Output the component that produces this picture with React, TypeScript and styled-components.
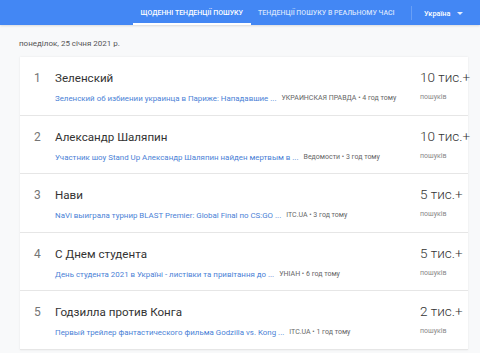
import React from "react";
import styled, { createGlobalStyle } from "styled-components";

const Global = createGlobalStyle`
  html, body { margin: 0; padding: 0; background: #f8f9fa; }
  body { font-family: Roboto, "Noto Sans", Arial, sans-serif; overflow: hidden; }
`;

const Page = styled.div`
  width: 480px;
  height: 353px;
  background: #f8f9fa;
  display: flex;
  flex-direction: column;
`;

const Header = styled.header`
  height: 25px;
  background: #4387f4;
  display: flex;
  align-items: stretch;
  padding-left: 133px;
  box-shadow: 0 1px 2px rgba(0, 0, 0, 0.12);
`;

const Tab = styled.div<{ $active?: boolean }>`
  display: flex;
  align-items: center;
  padding: 2px 7.5px 0;
  font-size: 7px;
  font-weight: 500;
  color: ${(p) => (p.$active ? "#fff" : "rgba(255,255,255,0.78)")};
  border-bottom: 2px solid ${(p) => (p.$active ? "#fff" : "transparent")};
  box-sizing: border-box;
  white-space: nowrap;
`;

const Divider = styled.div`
  width: 1px;
  background: rgba(255, 255, 255, 0.2);
  margin: 6px 12px 5px 9px;
`;

const Geo = styled.div`
  display: flex;
  align-items: center;
  gap: 7px;
  font-size: 7.3px;
  font-weight: 500;
  color: #fff;
  padding-top: 1px;
`;

const Caret = styled.span`
  width: 0;
  height: 0;
  border-left: 3px solid transparent;
  border-right: 3px solid transparent;
  border-top: 3.5px solid rgba(255, 255, 255, 0.85);
`;

const DateLine = styled.div`
  font-size: 8px;
  color: #555;
  padding: 14px 0 0 19px;
  height: 18px;
`;

const Card = styled.div`
  margin: 0 12px 0 20px;
  background: #fff;
  box-shadow: 0 0 2px rgba(0, 0, 0, 0.08);
  display: flex;
  flex-direction: column;
`;

const Row = styled.div`
  height: 58.5px;
  box-sizing: border-box;
  border-bottom: 1px solid #e6e6e6;
  display: flex;
  padding-left: 14px;
`;

const Rank = styled.div`
  width: 21px;
  font-size: 12px;
  line-height: 16px;
  color: #757575;
  padding-top: 13px;
`;

const Main = styled.div`
  flex: 1;
  display: flex;
  flex-direction: column;
  padding-top: 13px;
  min-width: 0;
`;

const Title = styled.div`
  font-size: 11.6px;
  line-height: 16px;
  color: #333;
`;

const Sub = styled.div`
  margin-top: 7px;
  font-size: 7.9px;
  line-height: 11px;
  white-space: nowrap;
  display: flex;
  gap: 5px;
`;

const Link = styled.span`
  color: #4a7fd6;
`;

const Source = styled.span`
  color: #666;
  font-size: 7px;
`;

const Count = styled.div`
  width: 48px;
  padding-top: 11px;
  display: flex;
  flex-direction: column;
`;

const Num = styled.div`
  font-size: 13.5px;
  font-weight: 300;
  line-height: 18px;
  color: #333;
  white-space: nowrap;
`;

const Label = styled.div`
  margin-top: 6px;
  font-size: 7px;
  line-height: 10px;
  color: #888;
`;

const items = [
  { t: "Зеленский", l: "Зеленский об избиении украинца в Париже: Нападавшие ...", s: "УКРАИНСКАЯ ПРАВДА • 4 год тому", c: "10 тис.+" },
  { t: "Александр Шаляпин", l: "Участник шоу Stand Up Александр Шаляпин найден мертвым в ...", s: "Ведомости • 3 год тому", c: "10 тис.+" },
  { t: "Нави", l: "NaVi выиграла турнир BLAST Premier: Global Final по CS:GO ...", s: "ITC.UA • 3 год тому", c: "5 тис.+" },
  { t: "С Днем студента", l: "День студента 2021 в Україні - листівки та привітання до ...", s: "УНІАН • 6 год тому", c: "5 тис.+" },
  { t: "Годзилла против Конга", l: "Первый трейлер фантастического фильма Godzilla vs. Kong ...", s: "ITC.UA • 1 год тому", c: "2 тис.+" },
];

export default function App() {
  return (
    <Page>
      <Global />
      <Header>
        <Tab $active>ЩОДЕННІ ТЕНДЕНЦІЇ ПОШУКУ</Tab>
        <Tab>ТЕНДЕНЦІЇ ПОШУКУ В РЕАЛЬНОМУ ЧАСІ</Tab>
        <Divider />
        <Geo>
          Україна <Caret />
        </Geo>
      </Header>
      <DateLine>понеділок, 25 січня 2021 р.</DateLine>
      <Card>
        {items.map((it, i) => (
          <Row key={i}>
            <Rank>{i + 1}</Rank>
            <Main>
              <Title>{it.t}</Title>
              <Sub>
                <Link>{it.l}</Link>
                <Source>{it.s}</Source>
              </Sub>
            </Main>
            <Count>
              <Num>{it.c}</Num>
              <Label>пошуків</Label>
            </Count>
          </Row>
        ))}
      </Card>
    </Page>
  );
}
